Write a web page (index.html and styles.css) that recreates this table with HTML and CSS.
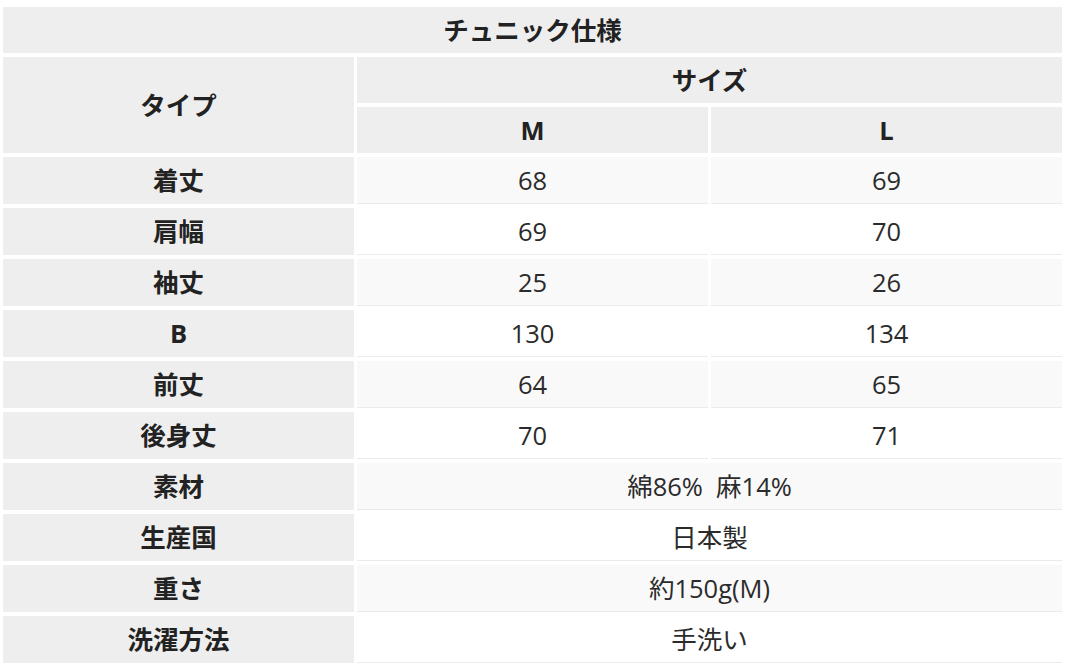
FILE: index.html
```html
<!DOCTYPE html>
<html lang="ja">
<head>
<meta charset="utf-8">
<title>チュニック仕様</title>
<link rel="stylesheet" href="styles.css">
</head>
<body>
<div class="wrap">
<table class="spec">
  <colgroup><col class="c"><col class="c"><col class="c"></colgroup>
  <thead>
    <tr><th class="hd" colspan="3">チュニック仕様</th></tr>
    <tr><th class="hd" rowspan="2">タイプ</th><th class="hd" colspan="2">サイズ</th></tr>
    <tr><th class="hd">M</th><th class="hd">L</th></tr>
  </thead>
  <tbody>
    <tr class="odd"><th>着丈</th><td>68</td><td>69</td></tr>
    <tr><th>肩幅</th><td>69</td><td>70</td></tr>
    <tr class="odd"><th>袖丈</th><td>25</td><td>26</td></tr>
    <tr><th>B</th><td>130</td><td>134</td></tr>
    <tr class="odd"><th>前丈</th><td>64</td><td>65</td></tr>
    <tr><th>後身丈</th><td>70</td><td>71</td></tr>
    <tr class="odd"><th>素材</th><td colspan="2">綿86%&nbsp;&nbsp;麻14%</td></tr>
    <tr><th>生産国</th><td colspan="2">日本製</td></tr>
    <tr class="odd"><th>重さ</th><td colspan="2">約150g(M)</td></tr>
    <tr><th>洗濯方法</th><td colspan="2">手洗い</td></tr>
  </tbody>
</table>
</div>
</body>
</html>
```
FILE: styles.css
```css
html, body {
  margin: 0;
  padding: 0;
  background: #fff;
}
.wrap {
  padding-top: 3px;
}
.spec {
  width: 100%;
  table-layout: fixed;
  border-collapse: separate;
  border-spacing: 3px 4px;
  margin: 0;
  font-family: "Open Sans", "Noto Sans CJK JP", sans-serif;
  font-size: 25.5px;
  color: #2b2b2b;
}
.spec th,
.spec td {
  text-align: center;
  vertical-align: middle;
  line-height: 36px;
  padding: 5px 0;
}
.spec th {
  background: #eeeeee;
  font-weight: 700;
  color: #222;
}
.spec th.hd {
  padding: 5px 0;
}
.spec tbody th {
  padding: 5px 0 6px;
}
.spec td {
  font-weight: 400;
  background: #fff;
  border-bottom: 1px solid #ebebeb;
}
.spec tr.odd td {
  background: #f9f9f9;
}
```
